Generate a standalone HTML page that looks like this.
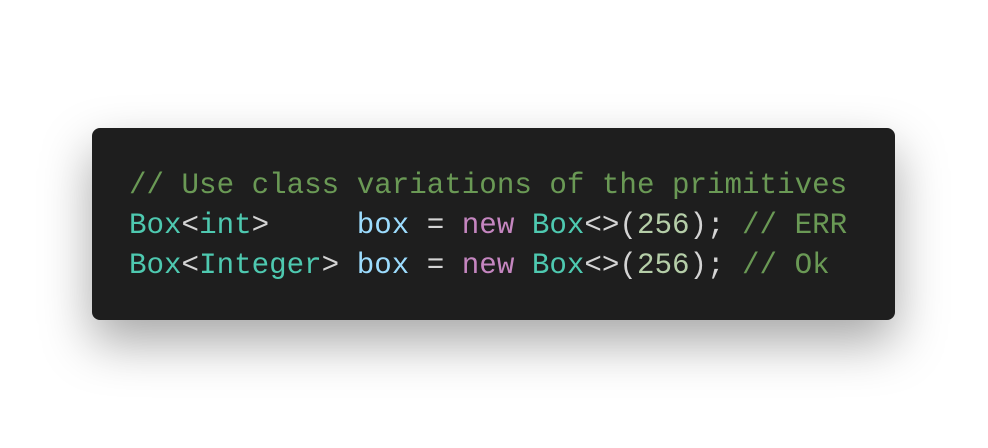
<!DOCTYPE html>
<html><head><style>
html,body{margin:0;padding:0;background:#fff;width:988px;height:448px;overflow:hidden}
.box{position:absolute;left:92px;top:128px;width:803px;height:192px;background:#1e1e1e;border-radius:8px;box-shadow:0 22px 50px rgba(0,0,0,0.35)}
pre{margin:0;position:absolute;left:37px;top:38px;font-family:"Liberation Mono","DejaVu Sans Mono",monospace;font-size:29.2px;line-height:40px;color:#d4d4d4;letter-spacing:0}
.c{color:#6a9955}.t{color:#4ec9b0}.v{color:#9cdcfe}.k{color:#c586c0}.n{color:#b5cea8}
</style></head><body>
<div class="box"><pre><span class="c">// Use class variations of the primitives</span>
<span class="t">Box</span>&lt;<span class="t">int</span>&gt;     <span class="v">box</span> = <span class="k">new</span> <span class="t">Box</span>&lt;&gt;(<span class="n">256</span>); <span class="c">// ERR</span>
<span class="t">Box</span>&lt;<span class="t">Integer</span>&gt; <span class="v">box</span> = <span class="k">new</span> <span class="t">Box</span>&lt;&gt;(<span class="n">256</span>); <span class="c">// Ok</span></pre></div>
</body></html>
